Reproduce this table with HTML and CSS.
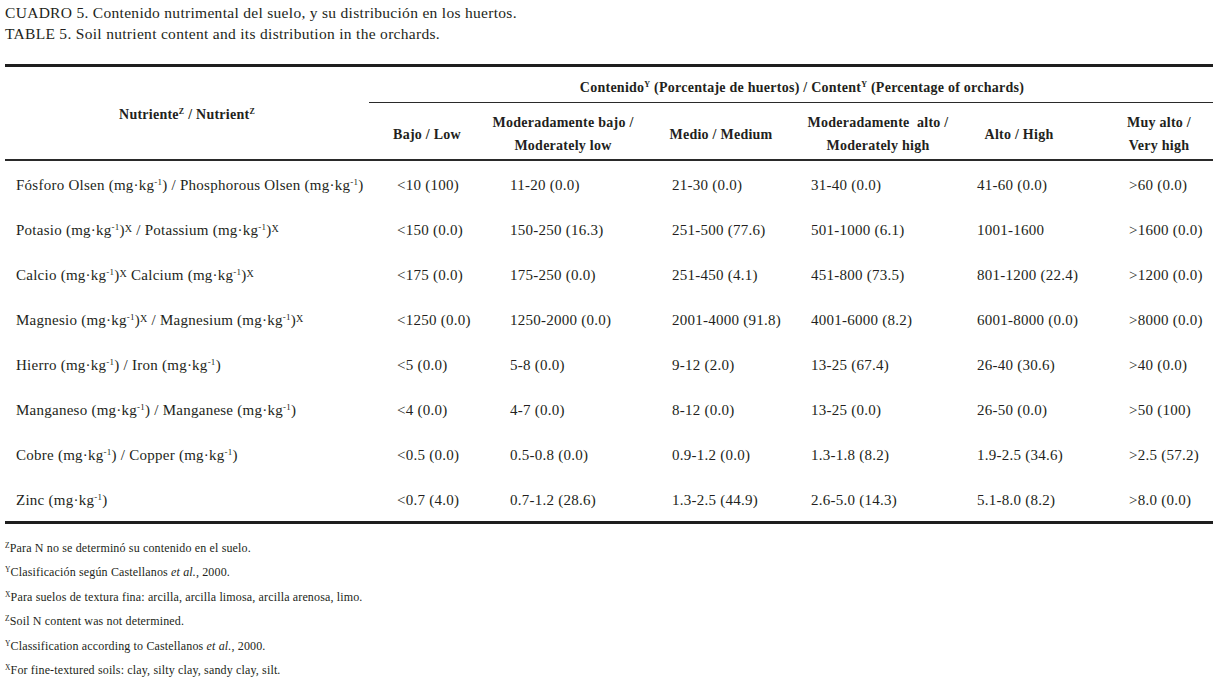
FILE: index.html
```html
<!DOCTYPE html>
<html lang="es">
<head>
<meta charset="utf-8">
<title>Cuadro 5</title>
<link rel="stylesheet" href="styles.css">
</head>
<body>
<div class="page">
  <div class="caption">
    <p>CUADRO 5. Contenido nutrimental del suelo, y su distribución en los huertos.</p>
    <p>TABLE 5. Soil nutrient content and its distribution in the orchards.</p>
  </div>
  <table class="data">
    <colgroup>
      <col class="c0"><col class="c1"><col class="c2"><col class="c3"><col class="c4"><col class="c5"><col class="c6">
    </colgroup>
    <thead>
      <tr class="h1">
        <th rowspan="2" class="nut">Nutriente<sup class="fn">Z</sup> / Nutrient<sup class="fn">Z</sup></th>
        <th colspan="6" class="content">Contenido<sup class="fn">Y</sup> (Porcentaje de huertos) / Content<sup class="fn">Y</sup> (Percentage of orchards)</th>
      </tr>
      <tr class="h2">
        <th class="s1">Bajo / Low</th>
        <th class="s2">Moderadamente bajo /<br>Moderately low</th>
        <th class="s3">Medio / Medium</th>
        <th class="s4">Moderadamente&nbsp; alto /<br>Moderately high</th>
        <th class="s5">Alto / High</th>
        <th class="s6">Muy alto /<br>Very high</th>
      </tr>
    </thead>
    <tbody>
      <tr>
        <td>Fósforo Olsen (mg·kg<sup>-1</sup>) / Phosphorous Olsen (mg·kg<sup>-1</sup>)</td>
        <td>&lt;10 (100)</td><td>11-20 (0.0)</td><td>21-30 (0.0)</td><td>31-40 (0.0)</td><td>41-60 (0.0)</td><td>&gt;60 (0.0)</td>
      </tr>
      <tr>
        <td>Potasio (mg·kg<sup>-1</sup>)<sup class="x">X</sup> / Potassium (mg·kg<sup>-1</sup>)<sup class="x">X</sup></td>
        <td>&lt;150 (0.0)</td><td>150-250 (16.3)</td><td>251-500 (77.6)</td><td>501-1000 (6.1)</td><td>1001-1600</td><td>&gt;1600 (0.0)</td>
      </tr>
      <tr>
        <td>Calcio (mg·kg<sup>-1</sup>)<sup class="x">X</sup> Calcium (mg·kg<sup>-1</sup>)<sup class="x">X</sup></td>
        <td>&lt;175 (0.0)</td><td>175-250 (0.0)</td><td>251-450 (4.1)</td><td>451-800 (73.5)</td><td>801-1200 (22.4)</td><td>&gt;1200 (0.0)</td>
      </tr>
      <tr>
        <td>Magnesio (mg·kg<sup>-1</sup>)<sup class="x">X</sup> / Magnesium (mg·kg<sup>-1</sup>)<sup class="x">X</sup></td>
        <td>&lt;1250 (0.0)</td><td>1250-2000 (0.0)</td><td>2001-4000 (91.8)</td><td>4001-6000 (8.2)</td><td>6001-8000 (0.0)</td><td>&gt;8000 (0.0)</td>
      </tr>
      <tr>
        <td>Hierro (mg·kg<sup>-1</sup>) / Iron (mg·kg<sup>-1</sup>)</td>
        <td>&lt;5 (0.0)</td><td>5-8 (0.0)</td><td>9-12 (2.0)</td><td>13-25 (67.4)</td><td>26-40 (30.6)</td><td>&gt;40 (0.0)</td>
      </tr>
      <tr>
        <td>Manganeso (mg·kg<sup>-1</sup>) / Manganese (mg·kg<sup>-1</sup>)</td>
        <td>&lt;4 (0.0)</td><td>4-7 (0.0)</td><td>8-12 (0.0)</td><td>13-25 (0.0)</td><td>26-50 (0.0)</td><td>&gt;50 (100)</td>
      </tr>
      <tr>
        <td>Cobre (mg·kg<sup>-1</sup>) / Copper (mg·kg<sup>-1</sup>)</td>
        <td>&lt;0.5 (0.0)</td><td>0.5-0.8 (0.0)</td><td>0.9-1.2 (0.0)</td><td>1.3-1.8 (8.2)</td><td>1.9-2.5 (34.6)</td><td>&gt;2.5 (57.2)</td>
      </tr>
      <tr>
        <td>Zinc (mg·kg<sup>-1</sup>)</td>
        <td>&lt;0.7 (4.0)</td><td>0.7-1.2 (28.6)</td><td>1.3-2.5 (44.9)</td><td>2.6-5.0 (14.3)</td><td>5.1-8.0 (8.2)</td><td>&gt;8.0 (0.0)</td>
      </tr>
    </tbody>
  </table>
  <div class="notes">
    <p><sup>Z</sup>Para N no se determinó su contenido en el suelo.</p>
    <p><sup>Y</sup>Clasificación según Castellanos <i>et al.</i>, 2000.</p>
    <p><sup>X</sup>Para suelos de textura fina: arcilla, arcilla limosa, arcilla arenosa, limo.</p>
    <p><sup>Z</sup>Soil N content was not determined.</p>
    <p><sup>Y</sup>Classification according to Castellanos <i>et al.</i>, 2000.</p>
    <p><sup>X</sup>For fine-textured soils: clay, silty clay, sandy clay, silt.</p>
  </div>
</div>
</body>
</html>
```

FILE: styles.css
```css
html, body {
  margin: 0;
  padding: 0;
  background: #ffffff;
}

body {
  font-family: "Liberation Serif", "Times New Roman", serif;
  color: #231f20;
}

.page {
  padding: 2px 5px 0 5px;
}

.caption p {
  margin: 0;
  font-size: 15.5px;
  letter-spacing: 0.3px;
  line-height: 21px;
}

.data {
  margin-top: 20px;
  width: 1208px;
  border-collapse: collapse;
  table-layout: fixed;
  font-size: 15px;
  letter-spacing: 0.25px;
}

.c0 { width: 364px; }
.c1 { width: 116px; }
.c2 { width: 156px; }
.c3 { width: 160px; }
.c4 { width: 154px; }
.c5 { width: 128px; }
.c6 { width: 130px; }

.data thead {
  border-top: 3px solid #1e1e1e;
  border-bottom: 2px solid #2a2a2a;
}

.data th {
  font-weight: bold;
  font-size: 14px;
  letter-spacing: 0.25px;
  line-height: 23px;
  text-align: center;
  padding: 0;
  vertical-align: middle;
}

.h1 th.nut {
  padding-top: 4px;
}

.h1 th.content {
  height: 37px;
  border-bottom: 1px solid #2a2a2a;
  padding-left: 22px;
  padding-top: 6px;
  box-sizing: border-box;
  vertical-align: middle;
}

.h2 th {
  height: 57px;
  padding-top: 7px;
  box-sizing: border-box;
}

.h2 th.s6 { padding-left: 22px; }

.data sup {
  font-size: 9px;
  line-height: 0;
  vertical-align: 5px;
}

.data sup.fn {
  font-size: 8px;
  vertical-align: 5px;
}

.data sup.x {
  font-size: 10px;
  vertical-align: 3px;
}

.data td {
  height: 42px;
  padding: 3px 0 0 0;
  vertical-align: middle;
  white-space: nowrap;
  line-height: 20px;
}

.data td:nth-child(1) { padding-left: 11px; }
.data td:nth-child(2) { padding-left: 28px; }
.data td:nth-child(3) { padding-left: 25px; }
.data td:nth-child(4) { padding-left: 31px; }
.data td:nth-child(5) { padding-left: 10px; }
.data td:nth-child(6) { padding-left: 22px; }
.data td:nth-child(7) { padding-left: 46px; }

.data tbody {
  border-bottom: 3px solid #1e1e1e;
}

.notes {
  padding-top: 12px;
}

.notes p {
  margin: 0;
  font-size: 12px;
  letter-spacing: 0.15px;
  line-height: 24.6px;
}

.notes sup {
  font-size: 7.5px;
  line-height: 0;
  vertical-align: 4px;
}
```
